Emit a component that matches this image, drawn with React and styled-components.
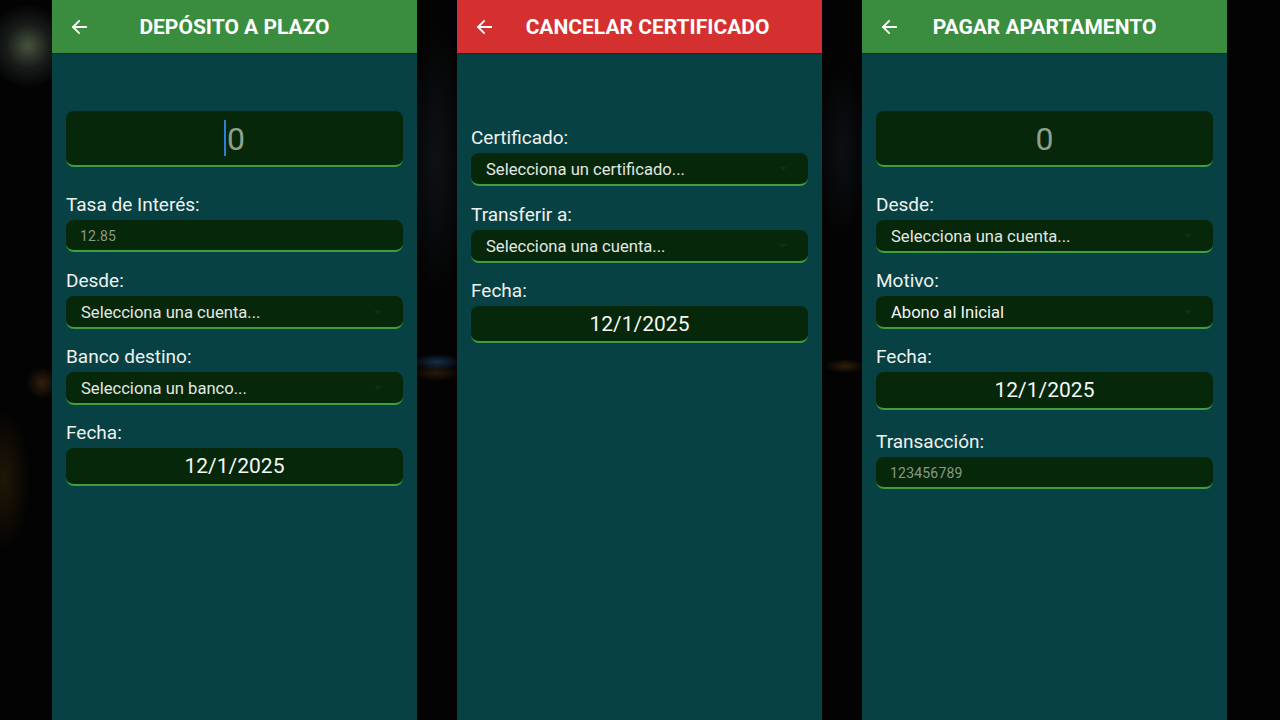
import React from 'react';
import styled, { createGlobalStyle } from 'styled-components';

const GlobalStyle = createGlobalStyle`
  html, body {
    margin: 0;
    padding: 0;
    background: #030303;
  }
  body {
    font-family: Roboto, "Noto Sans", "Liberation Sans", sans-serif;
  }
`;

const Stage = styled.div`
  width: 1280px;
  height: 720px;
  box-sizing: border-box;
  overflow: hidden;
  display: flex;
  padding-left: 52px;
  gap: 40px;
  background:
    radial-gradient(circle at 28px 46px, rgba(115, 135, 100, 0.6) 0, rgba(75, 90, 80, 0.28) 22px, transparent 42px),
    radial-gradient(circle at 42px 383px, rgba(120, 75, 25, 0.4) 0, transparent 16px),
    radial-gradient(ellipse 26px 70px at 4px 480px, rgba(85, 60, 15, 0.35), transparent),
    radial-gradient(ellipse 24px 8px at 437px 362px, rgba(40, 90, 140, 0.5), transparent),
    radial-gradient(ellipse 24px 8px at 437px 373px, rgba(90, 50, 20, 0.45), transparent),
    radial-gradient(ellipse 30px 140px at 437px 160px, rgba(40, 50, 60, 0.3), transparent),
    radial-gradient(ellipse 26px 90px at 842px 150px, rgba(40, 50, 60, 0.25), transparent),
    radial-gradient(ellipse 20px 7px at 845px 366px, rgba(120, 70, 20, 0.4), transparent),
    #030303;
`;

const Screen = styled.div`
  width: 365px;
  height: 720px;
  background: #084144;
  display: flex;
  flex-direction: column;
  flex-shrink: 0;
`;

const Header = styled.div`
  height: 53px;
  flex-shrink: 0;
  background: ${(p) => (p.$danger ? '#d3302f' : '#3a8d3e')};
  display: flex;
  align-items: center;
  position: relative;
  box-shadow: 0 1px 0 rgba(0, 0, 0, 0.25);
`;

const BackButton = styled.div`
  position: absolute;
  left: 19px;
  top: 19px;
  width: 16px;
  height: 16px;
  display: flex;
`;

const Title = styled.div`
  flex: 1;
  text-align: center;
  color: #ffffff;
  font-size: 21px;
  font-weight: 700;
  padding-left: ${(p) => p.$shift || 0}px;
  padding-top: 1px;
`;

const Form = styled.div`
  display: flex;
  flex-direction: column;
  padding: ${(p) => p.$top}px 14px 0;
`;

const Group = styled.div`
  display: flex;
  flex-direction: column;
  margin-top: ${(p) => p.$gap || 0}px;
`;

const Label = styled.div`
  color: #eef1ee;
  font-size: 19px;
  line-height: 22px;
  margin-bottom: 4px;
`;

const FieldBox = styled.div`
  box-sizing: border-box;
  height: ${(p) => p.$h}px;
  background: #06270a;
  border-radius: 8px;
  border-bottom: 2px solid #3f9e3f;
  display: flex;
  align-items: center;
  position: relative;
`;

const AmountBox = styled(FieldBox)`
  justify-content: center;
`;

const AmountText = styled.span`
  color: #8fa08c;
  font-size: 32px;
  line-height: 1;
  position: relative;
  top: 1px;
`;

const Caret = styled.span`
  display: inline-block;
  width: 2px;
  height: 36px;
  background: #2f7fd8;
  margin-right: 1px;
`;

const SelectText = styled.span`
  flex: 1;
  padding-left: 15px;
  color: ${(p) => (p.$value ? '#f4f6f4' : '#e3e7e3')};
  font-size: 16.6px;
  position: relative;
  top: 1px;
`;

const Arrow = styled.span`
  width: 0;
  height: 0;
  border-left: 4px solid transparent;
  border-right: 4px solid transparent;
  border-top: 4px solid #1a2a1a;
  margin-right: 21px;
`;

const InputText = styled.span`
  padding-left: 14px;
  color: #8a9888;
  font-size: 14px;
  letter-spacing: 0.2px;
  position: relative;
  top: 1px;
`;

const DateText = styled.span`
  flex: 1;
  text-align: center;
  color: #f4f6f4;
  font-size: 21px;
`;

const BackIcon = () => (
  <svg width="16" height="16" viewBox="0 0 16 16" fill="none">
    <path d="M15 8H2M8 2L2 8l6 6" stroke="#fff" strokeWidth="1.8" strokeLinecap="square" />
  </svg>
);

const Amount = ({ focused }) => (
  <AmountBox $h={56}>
    {focused && <Caret />}
    <AmountText>0</AmountText>
  </AmountBox>
);

const Select = ({ text, value }) => (
  <FieldBox $h={33}>
    <SelectText $value={value}>{text}</SelectText>
    <Arrow />
  </FieldBox>
);

const TextInput = ({ text }) => (
  <FieldBox $h={32}>
    <InputText>{text}</InputText>
  </FieldBox>
);

const DateField = ({ h = 38 }) => (
  <FieldBox $h={h}>
    <DateText>12/1/2025</DateText>
  </FieldBox>
);

const Field = ({ label, gap, children }) => (
  <Group $gap={gap}>
    <Label>{label}</Label>
    {children}
  </Group>
);

const Phone = ({ title, danger, shift, top, children }) => (
  <Screen>
    <Header $danger={danger}>
      <BackButton>
        <BackIcon />
      </BackButton>
      <Title $shift={shift}>{title}</Title>
    </Header>
    <Form $top={top}>{children}</Form>
  </Screen>
);

export default function App() {
  return (
    <>
      <GlobalStyle />
      <Stage>
        <Phone title="DEPÓSITO A PLAZO" top={58}>
          <Amount focused />
          <Field label="Tasa de Interés:" gap={27}>
            <TextInput text="12.85" />
          </Field>
          <Field label="Desde:" gap={18}>
            <Select text="Selecciona una cuenta..." />
          </Field>
          <Field label="Banco destino:" gap={17}>
            <Select text="Selecciona un banco..." />
          </Field>
          <Field label="Fecha:" gap={17}>
            <DateField />
          </Field>
        </Phone>

        <Phone title="CANCELAR CERTIFICADO" danger shift={16} top={74}>
          <Field label="Certificado:">
            <Select text="Selecciona un certificado..." />
          </Field>
          <Field label="Transferir a:" gap={18}>
            <Select text="Selecciona una cuenta..." />
          </Field>
          <Field label="Fecha:" gap={17}>
            <DateField h={37} />
          </Field>
        </Phone>

        <Phone title="PAGAR APARTAMENTO" top={58}>
          <Amount />
          <Field label="Desde:" gap={27}>
            <Select text="Selecciona una cuenta..." />
          </Field>
          <Field label="Motivo:" gap={17}>
            <Select text="Abono al Inicial" value />
          </Field>
          <Field label="Fecha:" gap={17}>
            <DateField h={38} />
          </Field>
          <Field label="Transacción:" gap={21}>
            <TextInput text="123456789" />
          </Field>
        </Phone>
      </Stage>
    </>
  );
}
